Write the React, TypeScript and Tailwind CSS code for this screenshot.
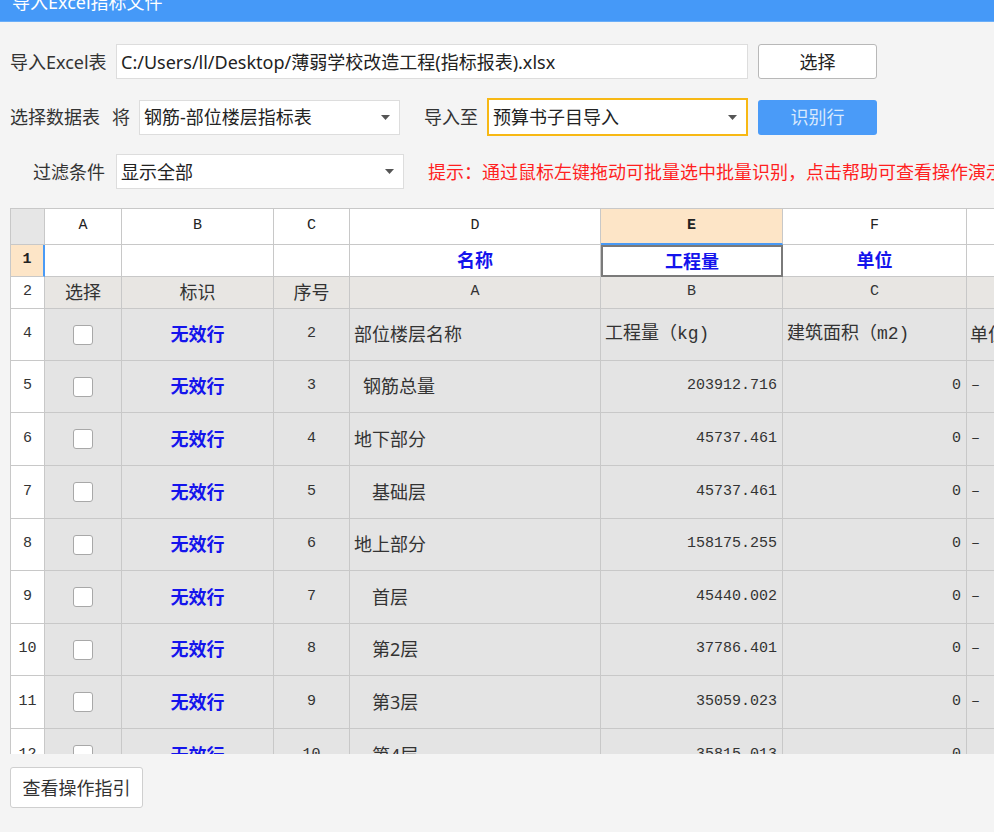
import React from 'react';

const sans = 'font-[family-name:Noto_Sans,Noto_Sans_CJK_SC,sans-serif]';
const mono = 'font-[family-name:Liberation_Mono,Noto_Sans_CJK_SC,monospace]';

const cols = 'grid grid-cols-[34px_77px_152px_76px_251px_182px_184px_140px]';
const cell = 'border-r border-b border-[#c8c8c8] flex items-center';

type Row = {
  n: string;
  h: string;
  seq: string;
  name: string;
  indent: string;
  e: string;
  f: string;
  g: string;
  head?: boolean;
};

const rows: Row[] = [
  { n: '4', h: 'h-[52px]', seq: '2', name: '部位楼层名称', indent: 'pl-[4px]', e: '工程量（kg)', f: '建筑面积（m2)', g: '单位', head: true },
  { n: '5', h: 'h-[52px]', seq: '3', name: '钢筋总量', indent: 'pl-[13px]', e: '203912.716', f: '0', g: '–' },
  { n: '6', h: 'h-[53px]', seq: '4', name: '地下部分', indent: 'pl-[4px]', e: '45737.461', f: '0', g: '–' },
  { n: '7', h: 'h-[53px]', seq: '5', name: '基础层', indent: 'pl-[22px]', e: '45737.461', f: '0', g: '–' },
  { n: '8', h: 'h-[52px]', seq: '6', name: '地上部分', indent: 'pl-[4px]', e: '158175.255', f: '0', g: '–' },
  { n: '9', h: 'h-[53px]', seq: '7', name: '首层', indent: 'pl-[22px]', e: '45440.002', f: '0', g: '–' },
  { n: '10', h: 'h-[52px]', seq: '8', name: '第2层', indent: 'pl-[22px]', e: '37786.401', f: '0', g: '–' },
  { n: '11', h: 'h-[53px]', seq: '9', name: '第3层', indent: 'pl-[22px]', e: '35059.023', f: '0', g: '–' },
  { n: '12', h: 'h-[53px]', seq: '10', name: '第4层', indent: 'pl-[22px]', e: '35815.013', f: '0', g: '–' },
];

function Arrow() {
  return (
    <svg width="9" height="5" viewBox="0 0 9 5" className="shrink-0">
      <path d="M0 0 H9 L4.5 5 Z" fill="#555" />
    </svg>
  );
}

function Select({ value, className }: { value: string; className: string }) {
  return (
    <div className={`shrink-0 flex items-center justify-between bg-white pl-[4px] pr-[9px] ${className}`}>
      <span className="text-[18px] leading-[22px] text-[#222]">{value}</span>
      <Arrow />
    </div>
  );
}

export default function App() {
  return (
    <div className={`w-[994px] h-[832px] overflow-hidden bg-[#f4f4f4] text-[#333] ${sans}`}>
      <div className="h-[22px] bg-[#4599f8] overflow-hidden border-b border-[#6aaef8]">
        <div className="mt-[-7px] ml-[12px] text-[18px] leading-[18px] text-white whitespace-nowrap">导入Excel指标文件</div>
      </div>

      <div className="flex items-center h-[35px] mt-[22px]">
        <span className="shrink-0 ml-[10px] w-[106px] text-[18px] leading-[22px]">导入Excel表</span>
        <div className="shrink-0 w-[632px] h-[35px] bg-white border border-[#dddddd] flex items-center pl-[4px]">
          <span className="text-[18px] leading-[22px] text-[#222] whitespace-nowrap">C:/Users/ll/Desktop/薄弱学校改造工程(指标报表).xlsx</span>
        </div>
        <button className="shrink-0 ml-[10px] w-[119px] h-[35px] bg-white border border-[#b8b8b8] rounded-[3px] text-[18px] leading-[22px] text-[#222]">
          选择
        </button>
      </div>

      <div className="flex items-center h-[38px] mt-[19px]">
        <span className="shrink-0 ml-[10px] text-[18px] leading-[22px]">选择数据表</span>
        <span className="shrink-0 ml-[12px] text-[18px] leading-[22px]">将</span>
        <Select value="钢筋-部位楼层指标表" className="ml-[9px] w-[261px] h-[35px] border border-[#dddddd]" />
        <span className="shrink-0 ml-[24px] text-[18px] leading-[22px]">导入至</span>
        <Select value="预算书子目导入" className="ml-[9px] w-[261px] h-[38px] border-2 border-[#f7b814] pl-[3px]" />
        <button className="shrink-0 ml-[10px] w-[119px] h-[35px] bg-[#4a9bf8] rounded-[3px] text-[18px] leading-[22px] text-[#d9e9fd]">
          识别行
        </button>
      </div>

      <div className="flex items-center h-[35px] mt-[18px]">
        <span className="shrink-0 ml-[33px] w-[83px] text-[18px] leading-[22px]">过滤条件</span>
        <Select value="显示全部" className="w-[288px] h-[35px] border border-[#dddddd]" />
        <span className="shrink-0 ml-[24px] text-[18px] leading-[22px] text-[#ff1f1f] whitespace-nowrap">
          提示：通过鼠标左键拖动可批量选中批量识别，点击帮助可查看操作演示
        </span>
      </div>

      <div className="ml-[10px] mt-[19px] w-[984px] h-[546px] overflow-hidden border-l border-t border-[#c8c8c8]">
        <div className={`${cols} h-[36px] ${mono} text-[15px] text-[#222]`}>
          <div className={`${cell} bg-[#e6e6e6]`} />
          <div className={`${cell} justify-center bg-white`}>A</div>
          <div className={`${cell} justify-center bg-white`}>B</div>
          <div className={`${cell} justify-center bg-white`}>C</div>
          <div className={`${cell} justify-center bg-white`}>D</div>
          <div className={`${cell} justify-center bg-[#fde5c7] font-bold border-b-2 border-b-[#4a9af5]`}>E</div>
          <div className={`${cell} justify-center bg-white`}>F</div>
          <div className={`${cell} justify-center bg-white`}>G</div>
        </div>

        <div className={`${cols} h-[32px]`}>
          <div className={`${cell} justify-center bg-[#fde5c7] ${mono} text-[15px] font-bold text-[#222] border-r-2 border-r-[#4a9af5]`}>1</div>
          <div className={`${cell} bg-white`} />
          <div className={`${cell} bg-white`} />
          <div className={`${cell} bg-white`} />
          <div className={`${cell} justify-center bg-white text-[18px] font-bold text-[#1414ec]`}>名称</div>
          <div className="border-2 border-[#7a7a7a] flex items-center justify-center bg-white text-[18px] font-bold text-[#1414ec]">工程量</div>
          <div className={`${cell} justify-center bg-white text-[18px] font-bold text-[#1414ec]`}>单位</div>
          <div className={`${cell} bg-white`} />
        </div>

        <div className={`${cols} h-[32px] text-[18px]`}>
          <div className={`${cell} justify-center bg-white ${mono} text-[15px]`}>2</div>
          <div className={`${cell} justify-center bg-[#e8e6e3]`}>选择</div>
          <div className={`${cell} justify-center bg-[#e8e6e3]`}>标识</div>
          <div className={`${cell} justify-center bg-[#e8e6e3]`}>序号</div>
          <div className={`${cell} justify-center bg-[#e8e6e3] ${mono} text-[15px]`}>A</div>
          <div className={`${cell} justify-center bg-[#e8e6e3] ${mono} text-[15px]`}>B</div>
          <div className={`${cell} justify-center bg-[#e8e6e3] ${mono} text-[15px]`}>C</div>
          <div className={`${cell} bg-[#e8e6e3]`} />
        </div>

        {rows.map((r) => (
          <div key={r.n} className={`${cols} ${r.h} text-[18px] text-[#333]`}>
            <div className={`${cell} justify-center bg-white ${mono} text-[15px]`}>{r.n}</div>
            <div className={`${cell} justify-center bg-[#e4e4e4]`}>
              <div className="w-[20px] h-[20px] bg-white border border-[#a8a8a8] rounded-[3px]" />
            </div>
            <div className={`${cell} justify-center bg-[#e4e4e4] font-bold text-[#1414ec]`}>无效行</div>
            <div className={`${cell} justify-center bg-[#e4e4e4] ${mono} text-[15px]`}>{r.seq}</div>
            <div className={`${cell} bg-[#e4e4e4] ${r.indent} whitespace-nowrap`}>{r.name}</div>
            {r.head ? (
              <>
                <div className={`${cell} bg-[#e4e4e4] pl-[4px] whitespace-nowrap ${mono}`}>{r.e}</div>
                <div className={`${cell} bg-[#e4e4e4] pl-[4px] whitespace-nowrap ${mono}`}>{r.f}</div>
                <div className={`${cell} bg-[#e4e4e4] pl-[3px] whitespace-nowrap`}>{r.g}</div>
              </>
            ) : (
              <>
                <div className={`${cell} justify-end bg-[#e4e4e4] pr-[5px] ${mono} text-[15px]`}>{r.e}</div>
                <div className={`${cell} justify-end bg-[#e4e4e4] pr-[5px] ${mono} text-[15px]`}>{r.f}</div>
                <div className={`${cell} bg-[#e4e4e4] pl-[4px] ${mono} text-[15px]`}>{r.g}</div>
              </>
            )}
          </div>
        ))}
      </div>

      <button className="ml-[10px] mt-[13px] w-[133px] h-[41px] bg-white border border-[#cfcfcf] rounded-[3px] text-[18px] leading-[22px] text-[#333]">
        查看操作指引
      </button>
    </div>
  );
}
